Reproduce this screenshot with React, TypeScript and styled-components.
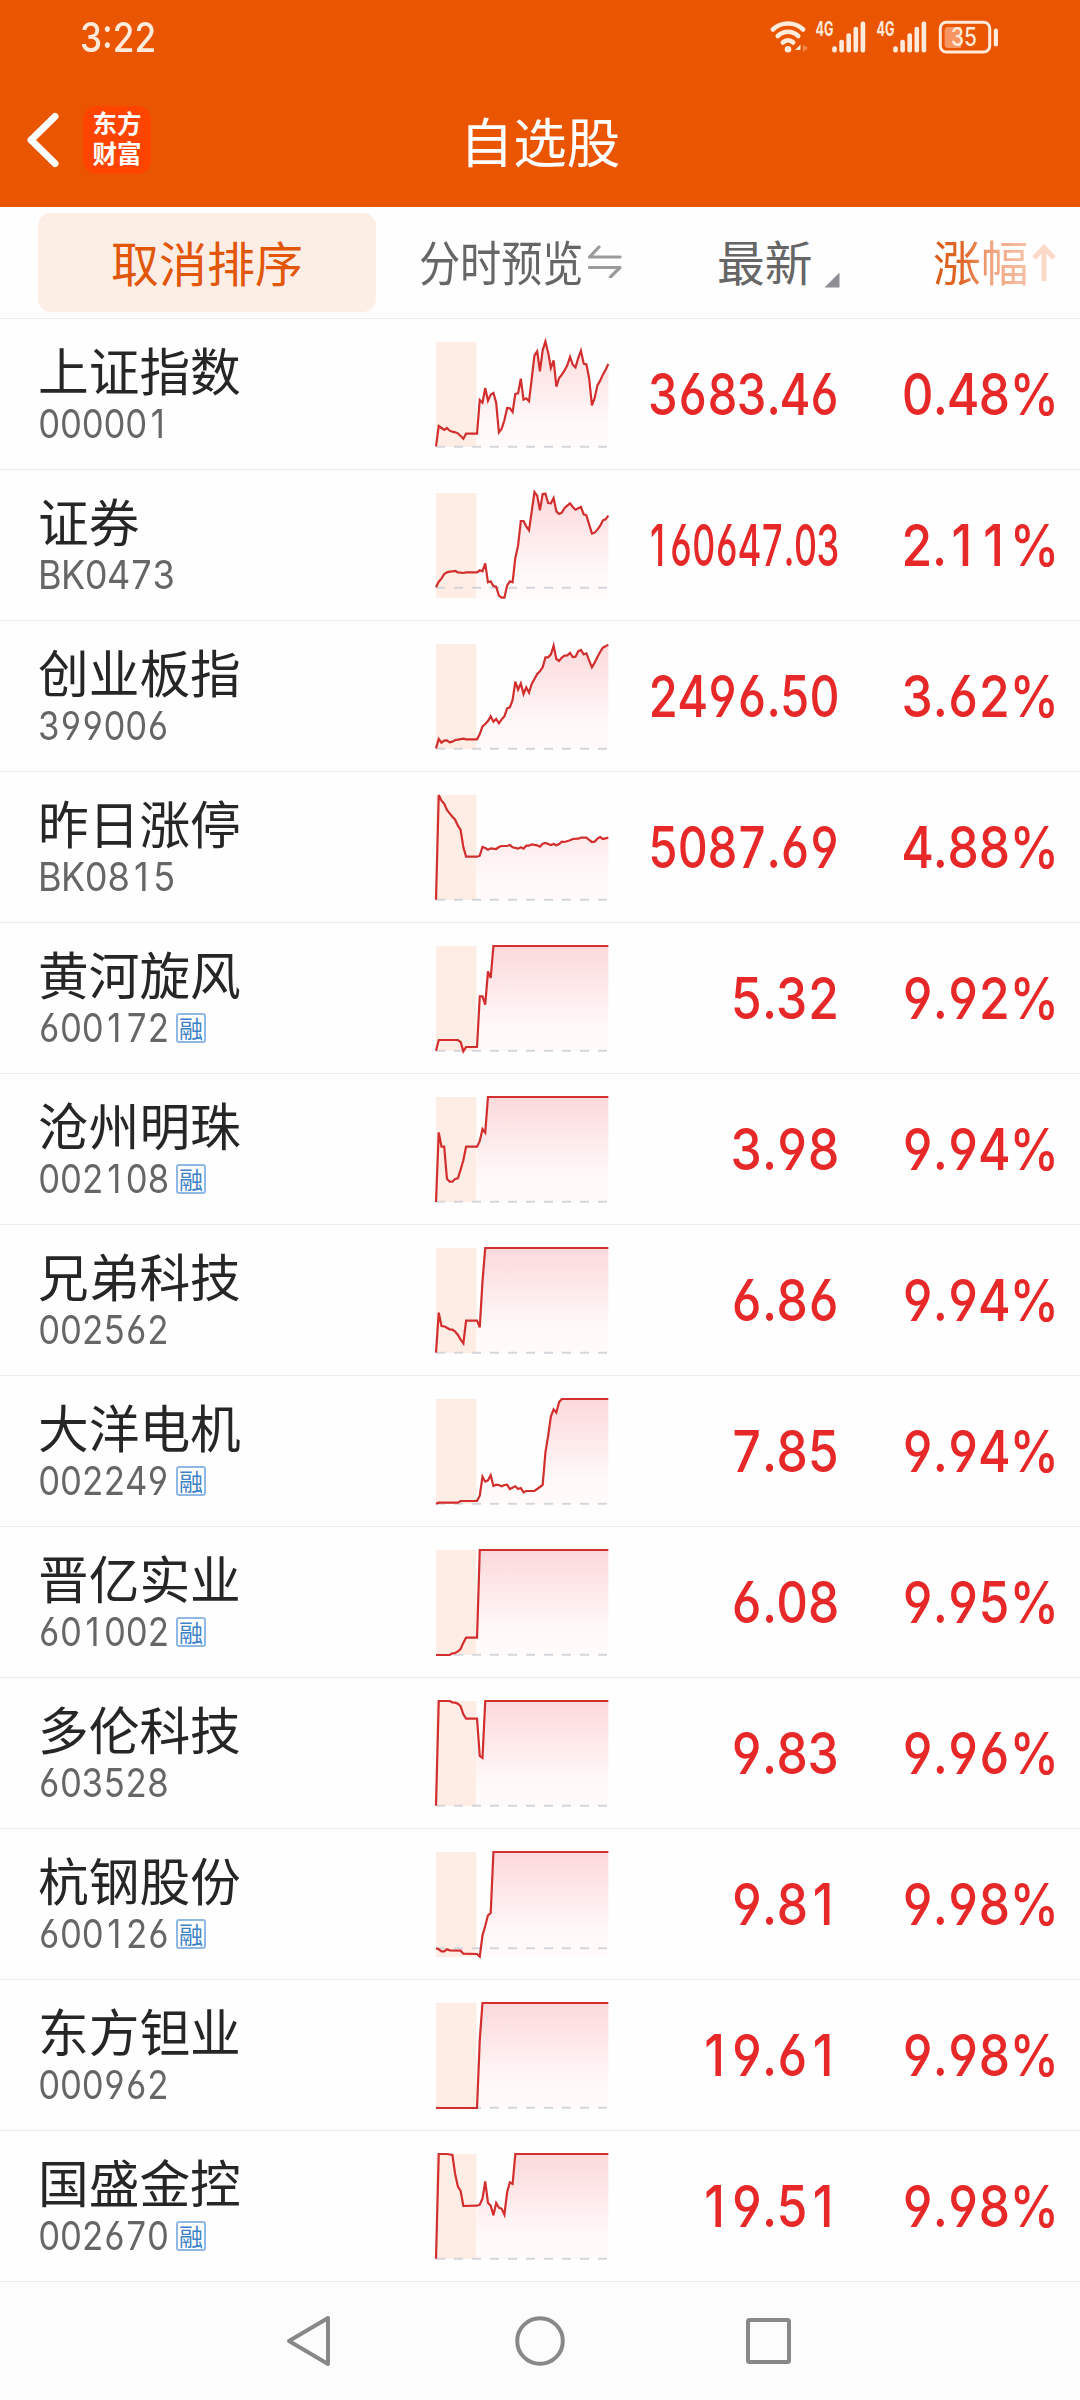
import React from "react";
import styled, { createGlobalStyle } from "styled-components";

const CJK = `"Noto Sans CJK SC", "Noto Sans", sans-serif`;
const NUM = `Inter, "Noto Sans", sans-serif`;

const GlobalStyle = createGlobalStyle`
  body { margin: 0; background: #fff; }
  * { box-sizing: border-box; }
`;

const Screen = styled.div`
  width: 1080px;
  height: 2400px;
  display: flex;
  flex-direction: column;
  background: #fefefe;
  font-family: ${CJK};
  overflow: hidden;
`;

const TopArea = styled.header`
  height: 207px;
  background: #ea5502;
  display: flex;
  flex-direction: column;
`;

const StatusBar = styled.div`
  height: 76px;
  padding: 0 81px 2px 80px;
  display: flex;
  align-items: center;
  justify-content: space-between;
  color: #ffeadb;
  font-family: ${NUM};
`;

const Squeeze = styled.span<{ $x: number; $origin?: string }>`
  display: inline-block;
  flex: none;
  white-space: nowrap;
  transform: scaleX(${(p) => p.$x});
  transform-origin: ${(p) => p.$origin || "left"} center;
`;

const Clock = styled.div`
  font-size: 40.5px;
  line-height: 40px;
  font-weight: 500;
  width: 90px;
  margin-top: 2px;
`;

const StatusIcons = styled.div`
  display: flex;
  align-items: center;
`;

const StatusGlyph = styled.svg`
  display: block;
  overflow: visible;
`;

const TitleBar = styled.div`
  height: 131px;
  display: grid;
  grid-template-columns: 83px 1fr 151px;
  align-items: center;
`;

const BackIcon = styled.svg`
  display: block;
  margin: -3px 0 0 22px;
`;

const TitleWrap = styled.div`
  display: grid;
  grid-template-columns: 68px 1fr;
  align-items: center;
`;

const AppLogo = styled.div`
  width: 68px;
  height: 68px;
  margin-top: -3px;
  border-radius: 14px;
  background: #ff4400;
  color: #fff;
  display: flex;
  flex-direction: column;
  align-items: center;
  justify-content: center;
  font-size: 24.5px;
  line-height: 29.5px;
  font-weight: 700;
  padding-bottom: 5px;
`;

const Title = styled.h1`
  margin: -4px 0 0 0;
  text-align: center;
  color: #fff;
  font-size: 53.5px;
  line-height: 60px;
  font-weight: 400;
`;

const SortBar = styled.div`
  height: 112px;
  padding-left: 38px;
  display: grid;
  grid-template-columns: 338px 247px 219px 238px;
  align-items: center;
  border-bottom: 1px solid #ececee;
  color: #666;
  font-size: 47.8px;
  line-height: 56px;
`;

const CancelSort = styled.button`
  height: 99px;
  width: 338px;
  border: 0;
  border-radius: 13px;
  background: #fdeee5;
  color: #e2560a;
  font: 400 48px/56px ${CJK};
  padding: 0 0 3px;
`;

const HeadCell = styled.div<{ $pad: number }>`
  display: flex;
  align-items: center;
  height: 100%;
  padding: 0 0 4px ${(p) => p.$pad}px;
  svg { flex: none; }
`;

const Label = styled.span<{ $w: number }>`
  width: ${(p) => p.$w}px;
  white-space: nowrap;
  flex: none;
`;

const FadeLabel = styled(Label)`
  background: linear-gradient(90deg, #d85a14 0%, #e06a2c 32%, #f0a27c 58%, #f6c6ae 100%);
  background-clip: text;
  -webkit-background-clip: text;
  color: transparent;
`;

const CornerMark = styled.svg`
  margin-top: 38px;
`;

const List = styled.main`
  display: flex;
  flex-direction: column;
`;

const Row = styled.article`
  height: 151px;
  padding-left: 38px;
  display: grid;
  grid-template-columns: 398px 173px 230px 219px;
  align-items: center;
  border-bottom: 1px solid #ececee;
`;

const NameCell = styled.div`
  display: flex;
  flex-direction: column;
`;

const StockName = styled.div`
  font-size: 50.7px;
  line-height: 56px;
  color: #262626;
  margin-top: -2px;
`;

const CodeLine = styled.div`
  display: flex;
  align-items: center;
  height: 44px;
  margin-top: 5px;
`;

const Code = styled.span<{ $w: number }>`
  width: ${(p) => p.$w}px;
  font-family: ${NUM};
  font-size: 39px;
  line-height: 44px;
  letter-spacing: -0.02em;
  color: #666;
  font-feature-settings: "tnum", "cv03", "cv04";
`;

const MarginTag = styled.span`
  width: 30px;
  height: 30px;
  margin-top: 1px;
  border: 2px solid #8fb9e4;
  border-radius: 3px;
  color: #3c82c8;
  font-size: 24px;
  line-height: 24px;
  display: flex;
  align-items: center;
  justify-content: center;
  padding-bottom: 1px;
`;

const Chart = styled.svg`
  display: block;
  overflow: visible;
`;

const Figure = styled.div`
  display: flex;
  justify-content: flex-end;
  font-family: ${NUM};
  font-size: 58px;
  line-height: 60px;
  font-weight: 450;
  letter-spacing: -0.02em;
  color: #e62828;
  font-feature-settings: "tnum", "cv03", "cv04";
`;

const PlainOne = styled.span`
  display: inline-block;
  width: 0.638em;
  padding-right: 0.135em;
  text-align: right;
  font-feature-settings: "tnum" 0;
`;

const PlainMark = styled.span`
  font-feature-settings: "tnum" 0;
`;

const NavBar = styled.nav`
  height: 118px;
  background: #fcfcfc;
  display: flex;
  justify-content: center;
  align-items: center;
  gap: 176px;
  svg { display: block; }
`;

type Pt = [number, number];
type Stock = {
  name: string;
  code: string;
  tag?: boolean;
  price: string;
  pct: string;
  pts: Pt[];
  base?: number;
};

const stocks: Stock[] = [
  { name: "上证指数", code: "000001", price: "3683.46", pct: "0.48%",
    pts: [[0,313],[1,252],[2,258],[3,264],[4,258],[5,266],[6,269],[7,271],[8,274],[9,282],[10,290],[11,275],[15,275],[16,174],[17,182],[18,138],[19,176],[20,158],[21,153],[22,182],[23,271],[24,260],[25,235],[26,198],[27,199],[28,210],[29,156],[30,154],[31,110],[32,173],[33,169],[34,178],[35,110],[36,40],[37,28],[38,88],[39,25],[40,-2],[41,32],[42,78],[43,55],[44,134],[45,108],[46,98],[47,85],[48,70],[49,45],[50,68],[51,76],[52,48],[53,26],[54,65],[55,67],[56,110],[57,190],[58,168],[59,130],[60,116],[61,98],[62,83],[63,66]] },
  { name: "证券", code: "BK0473", price: "160647.03", pct: "2.11%", base: 284,
    pts: [[0,283],[1,266],[2,257],[3,243],[4,238],[5,236],[6,235],[7,234],[8,238],[9,239],[10,240],[11,238],[15,238],[16,232],[17,235],[18,211],[19,268],[20,265],[21,279],[22,281],[23,308],[24,314],[25,314],[26,277],[27,265],[28,268],[29,195],[30,158],[31,84],[32,84],[33,100],[34,112],[35,55],[36,-3],[37,8],[38,52],[39,3],[40,2],[41,30],[42,31],[43,15],[44,55],[45,63],[46,59],[47,45],[48,38],[49,31],[50,42],[51,50],[52,46],[53,42],[54,64],[55,67],[56,95],[57,122],[58,119],[59,110],[60,99],[61,82],[62,79],[63,68]] },
  { name: "创业板指", code: "399006", price: "2496.50", pct: "3.62%",
    pts: [[0,313],[1,285],[2,296],[3,290],[4,289],[5,295],[6,293],[7,288],[8,287],[10,284],[11,286],[15,286],[16,270],[17,247],[18,240],[19,231],[20,217],[21,233],[22,225],[23,238],[24,226],[25,217],[26,193],[27,190],[28,168],[29,113],[30,137],[31,118],[32,150],[33,130],[34,146],[35,120],[36,105],[37,90],[38,82],[39,70],[40,40],[41,40],[42,31],[43,5],[44,45],[45,51],[46,41],[47,35],[48,34],[49,27],[50,39],[51,38],[52,22],[53,18],[54,31],[55,28],[56,50],[57,70],[58,56],[59,39],[60,24],[61,11],[62,7],[63,2]] },
  { name: "昨日涨停", code: "BK0815", price: "5087.69", pct: "4.88%",
    pts: [[0,314],[1,0],[2,17],[3,26],[4,45],[5,55],[6,65],[7,74],[8,92],[9,105],[10,157],[11,185],[15,185],[16,182],[17,156],[18,159],[19,164],[20,160],[22,162],[23,156],[24,153],[26,153],[27,150],[28,157],[30,161],[31,157],[32,161],[33,152],[34,152],[35,148],[37,151],[38,155],[39,146],[40,144],[42,150],[43,147],[44,151],[45,147],[46,140],[47,141],[49,136],[50,132],[52,131],[53,128],[55,128],[56,135],[57,141],[58,140],[59,131],[60,126],[61,132],[62,130],[63,128]] },
  { name: "黄河旋风", code: "600172", tag: true, price: "5.32", pct: "9.92%",
    pts: [[0,314],[1,282],[8,282],[9,288],[10,316],[11,303],[15,303],[16,151],[17,151],[18,176],[19,76],[20,96],[21,0],[63,0]] },
  { name: "沧州明珠", code: "002108", tag: true, price: "3.98", pct: "9.94%",
    pts: [[0,315],[1,106],[2,149],[3,149],[4,245],[5,254],[6,254],[7,246],[8,244],[9,218],[10,190],[11,149],[15,149],[16,132],[17,96],[18,107],[19,0],[63,0]] },
  { name: "兄弟科技", code: "002562", price: "6.86", pct: "9.94%",
    pts: [[0,314],[1,194],[2,234],[3,235],[5,244],[6,245],[7,251],[8,261],[9,275],[10,286],[11,218],[15,218],[16,238],[17,100],[18,0],[63,0]] },
  { name: "大洋电机", code: "002249", tag: true, price: "7.85", pct: "9.94%",
    pts: [[0,314],[1,311],[8,311],[9,306],[15,306],[16,290],[17,233],[18,248],[19,244],[20,229],[21,261],[22,257],[23,258],[24,262],[25,258],[26,257],[27,270],[29,262],[30,270],[31,267],[32,280],[33,276],[36,276],[38,264],[39,258],[40,160],[41,110],[42,52],[43,31],[44,41],[45,9],[46,0],[63,0]] },
  { name: "晋亿实业", code: "601002", tag: true, price: "6.08", pct: "9.95%",
    pts: [[0,315],[5,315],[6,310],[7,309],[8,304],[9,297],[10,278],[11,263],[15,263],[16,0],[63,0]] },
  { name: "多伦科技", code: "603528", price: "9.83", pct: "9.96%",
    pts: [[0,314],[1,0],[5,0],[6,4],[7,5],[8,8],[9,16],[10,40],[11,53],[15,53],[16,165],[17,171],[18,0],[63,0]] },
  { name: "杭钢股份", code: "600126", tag: true, price: "9.81", pct: "9.98%", base: 289,
    pts: [[0,289],[1,292],[2,298],[3,298],[4,292],[5,295],[9,296],[10,305],[15,306],[16,314],[17,250],[18,222],[19,190],[20,183],[21,0],[63,0]] },
  { name: "东方钽业", code: "000962", price: "19.61", pct: "9.98%",
    pts: [[0,315],[15,315],[16,110],[17,0],[63,0]] },
  { name: "国盛金控", code: "002670", tag: true, price: "19.51", pct: "9.98%",
    pts: [[0,314],[1,0],[4,0],[6,3],[7,60],[8,98],[9,111],[10,156],[15,155],[16,152],[17,133],[18,82],[19,146],[20,155],[21,184],[22,147],[23,161],[24,164],[25,182],[26,115],[27,85],[28,90],[29,0],[63,0]] },
];

const STEP = 517 / 63;

function Sparkline({ pts, base = 314 }: { pts: Pt[]; base?: number }) {
  const line = pts.map(([i, y]) => `${(i * STEP).toFixed(1)},${y}`).join(" ");
  const session = pts.filter(([i]) => i >= 15);
  const area = session.map(([i, y]) => `${Math.max(121, i * STEP).toFixed(1)},${y}`).join(" ");
  return (
    <Chart width="172.33" height="105" viewBox="0 0 517 315">
      <defs>
        <linearGradient id="fade" gradientUnits="userSpaceOnUse" x1="0" y1="0" x2="0" y2="315">
          <stop offset="0" stopColor="#fcd9db" />
          <stop offset="0.75" stopColor="#fff8f8" />
          <stop offset="1" stopColor="#fffbfa" />
        </linearGradient>
      </defs>
      <rect x="0" y="0" width="121" height="315" fill="#feede4" />
      <polygon points={`${area} 517,315 121,315`} fill="url(#fade)" />
      <line x1="0" y1={base} x2="517" y2={base} stroke="#d5d6db" strokeWidth="6" strokeDasharray="27 27" />
      <polyline points={line} fill="none" stroke="#d22e2e" strokeWidth="6.6" strokeLinejoin="miter" />
    </Chart>
  );
}

const Signal = () => (
  <StatusGlyph width="61" height="36" viewBox="0 0 61 36">
    <text x="0.5" y="16.5" fontSize="19.5" fontWeight="700" fontFamily="Inter, sans-serif" fill="#ffeadb" textLength="18" lengthAdjust="spacingAndGlyphs">4G</text>
    {[27.3, 20.7, 14.2, 7.7, 2.5].map((y, k) => (
      <rect key={k} x={17.2 + k * 7.1} y={y} width="4.6" height={33.5 - y} rx="2" fill="#ffeadb" />
    ))}
  </StatusGlyph>
);

/* Tabular figures, with a plain flag "1" and narrow punctuation. */
function Digits({ value }: { value: string }) {
  return (
    <>
      {value.split(/([1.%])/).filter(Boolean).map((part, k) => {
        if (part === "1") return <PlainOne key={k}>1</PlainOne>;
        if (part === "." || part === "%") return <PlainMark key={k}>{part}</PlainMark>;
        return part;
      })}
    </>
  );
}

function numScale(price: string) {
  return price.length > 7 ? 0.627 : price.length > 6 ? 0.813 : 0.86;
}

export default function App() {
  return (
    <Screen>
      <GlobalStyle />
      <TopArea>
        <StatusBar>
          <Clock><Squeeze $x={0.87}>3:22</Squeeze></Clock>
          <StatusIcons>
            <StatusGlyph width="45" height="36" viewBox="0 0 45 36" fill="none" stroke="#ffeadb" strokeWidth="4.6" strokeLinecap="round">
              <path d="M2.8 10.5 C11 2.5 25 2.5 33.2 10.5" />
              <path d="M7.8 17 C13.5 11.3 22.5 11.3 28.2 17" />
              <path d="M12.8 23.5 C16 20.4 20 20.4 23.2 23.5" />
              <circle cx="18" cy="30.3" r="3.3" fill="#ffeadb" stroke="none" />
              <path d="M30.5 25.5 V33 M30.5 25.5 L25 31 H30.5Z" fill="#ffeadb" stroke="none" />
              <path d="M33 25.5 L38 29 L33 33Z" fill="#ffeadb" opacity="0.35" stroke="none" />
            </StatusGlyph>
            <Signal />
            <Signal />
            <StatusGlyph width="62" height="36" viewBox="0 0 62 36">
              <rect x="3.3" y="3.2" width="49.4" height="29.8" rx="6" fill="none" stroke="#ffeadb" strokeWidth="3" />
              <path d="M9 8 H24 V29 H11 Q7.6 29 7.6 25 V12 Q7.6 8 11 8Z" fill="#f79563" />
              <rect x="56.8" y="9.5" width="4.2" height="18" rx="2" fill="#ffeadb" />
              <text x="14" y="27.2" fontSize="25" fontWeight="500" fontFamily="Inter, sans-serif" fill="#ffeadb" textLength="26" lengthAdjust="spacingAndGlyphs">35</text>
            </StatusGlyph>
          </StatusIcons>
        </StatusBar>
        <TitleBar>
          <BackIcon width="42" height="60" viewBox="0 0 42 60" fill="none" stroke="#fff" strokeWidth="7" strokeLinecap="round" strokeLinejoin="round">
            <path d="M33 6.5 L9 30 L33 53.5" />
          </BackIcon>
          <TitleWrap>
            <AppLogo><span>东方</span><span>财富</span></AppLogo>
            <Title>自选股</Title>
          </TitleWrap>
        </TitleBar>
      </TopArea>
      <SortBar>
        <CancelSort>取消排序</CancelSort>
        <HeadCell $pad={43}>
          <Label $w={169}><Squeeze $x={0.86}>分时预览</Squeeze></Label>
          <svg width="34" height="34" viewBox="0 0 34 34" fill="none" stroke="#9b9b9b" strokeWidth="3.2" strokeLinecap="round" strokeLinejoin="round">
            <path d="M32 13 H1.5 L11 3" />
            <path d="M1.5 23.5 H32 L22.5 33" />
          </svg>
        </HeadCell>
        <HeadCell $pad={94}>
          <Label $w={107}>最新</Label>
          <CornerMark width="16" height="16" viewBox="0 0 16 16">
            <path d="M15.5 0.5 V15.5 H0.5Z" fill="#8e8e94" />
          </CornerMark>
        </HeadCell>
        <HeadCell $pad={91}>
          <FadeLabel $w={99}>涨幅</FadeLabel>
          <svg width="24" height="40" viewBox="0 0 24 40" fill="none" stroke="#fad9c9" strokeWidth="5">
            <path d="M12 40 V7" />
            <path d="M2 17 L12 6.5 L22 17" />
          </svg>
        </HeadCell>
      </SortBar>
      <List>
        {stocks.map((s) => (
          <Row key={s.code}>
            <NameCell>
              <StockName>{s.name}</StockName>
              <CodeLine>
                <Code $w={138}>
                  <Squeeze $x={s.code.startsWith("BK") ? 0.925 : 0.888}><Digits value={s.code} /></Squeeze>
                </Code>
                {s.tag && <MarginTag>融</MarginTag>}
              </CodeLine>
            </NameCell>
            <Sparkline pts={s.pts} base={s.base} />
            <Figure><Squeeze $x={numScale(s.price)} $origin="right"><Digits value={s.price} /></Squeeze></Figure>
            <Figure><Squeeze $x={0.86} $origin="right"><Digits value={s.pct} /></Squeeze></Figure>
          </Row>
        ))}
      </List>
      <NavBar>
        <svg width="52" height="56" viewBox="0 0 52 56" fill="none" stroke="#888" strokeWidth="4" strokeLinejoin="round">
          <path d="M44 5 V51 L5 28Z" />
        </svg>
        <svg width="56" height="56" viewBox="0 0 56 56" fill="none" stroke="#888" strokeWidth="4">
          <circle cx="28" cy="28" r="22.8" />
        </svg>
        <svg width="52" height="56" viewBox="0 0 52 56" fill="none" stroke="#888" strokeWidth="4">
          <rect x="4" y="7" width="41" height="42" rx="1.5" />
        </svg>
      </NavBar>
    </Screen>
  );
}
